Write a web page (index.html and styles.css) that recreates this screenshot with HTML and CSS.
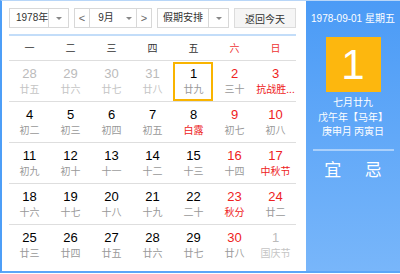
FILE: index.html
```html
<!doctype html>
<html lang="zh-CN">
  <head>
    <meta charset="UTF-8" />
    <meta name="viewport" content="width=device-width, initial-scale=1.0" />
    <title>万年历</title>
    <link rel="stylesheet" href="styles.css">
  </head>
  <body>
    <div class="calendar">
      <div class="main">
        <div class="toolbar">
          <div class="select year">
            <span class="select-text">1978年</span>
            <span class="select-arrow"><i class="caret"></i></span>
          </div>
          <div class="select month">
            <span class="nav">&lt;</span>
            <span class="select-text">9月</span>
            <span class="month-arrow"><i class="caret"></i></span>
            <span class="nav next">&gt;</span>
          </div>
          <div class="select holiday">
            <span class="select-text">假期安排</span>
            <span class="select-arrow"><i class="caret"></i></span>
          </div>
          <button class="today-btn">返回今天</button>
        </div>

        <div class="weekdays">
          <span>一</span><span>二</span><span>三</span><span>四</span><span>五</span>
          <span class="red">六</span><span class="red">日</span>
        </div>

        <div class="days">
          <div class="day other"><b>28</b><em>廿五</em></div>
          <div class="day other"><b>29</b><em>廿六</em></div>
          <div class="day other"><b>30</b><em>廿七</em></div>
          <div class="day other"><b>31</b><em>廿八</em></div>
          <div class="day today"><b>1</b><em>廿九</em></div>
          <div class="day weekend"><b>2</b><em>三十</em></div>
          <div class="day weekend fest"><b>3</b><em>抗战胜...</em></div>

          <div class="day"><b>4</b><em>初二</em></div>
          <div class="day"><b>5</b><em>初三</em></div>
          <div class="day"><b>6</b><em>初四</em></div>
          <div class="day"><b>7</b><em>初五</em></div>
          <div class="day fest"><b>8</b><em>白露</em></div>
          <div class="day weekend"><b>9</b><em>初七</em></div>
          <div class="day weekend"><b>10</b><em>初八</em></div>

          <div class="day"><b>11</b><em>初九</em></div>
          <div class="day"><b>12</b><em>初十</em></div>
          <div class="day"><b>13</b><em>十一</em></div>
          <div class="day"><b>14</b><em>十二</em></div>
          <div class="day"><b>15</b><em>十三</em></div>
          <div class="day weekend"><b>16</b><em>十四</em></div>
          <div class="day weekend fest"><b>17</b><em>中秋节</em></div>

          <div class="day"><b>18</b><em>十六</em></div>
          <div class="day"><b>19</b><em>十七</em></div>
          <div class="day"><b>20</b><em>十八</em></div>
          <div class="day"><b>21</b><em>十九</em></div>
          <div class="day"><b>22</b><em>二十</em></div>
          <div class="day weekend fest"><b>23</b><em>秋分</em></div>
          <div class="day weekend"><b>24</b><em>廿二</em></div>

          <div class="day"><b>25</b><em>廿三</em></div>
          <div class="day"><b>26</b><em>廿四</em></div>
          <div class="day"><b>27</b><em>廿五</em></div>
          <div class="day"><b>28</b><em>廿六</em></div>
          <div class="day"><b>29</b><em>廿七</em></div>
          <div class="day weekend"><b>30</b><em>廿八</em></div>
          <div class="day other"><b>1</b><em>国庆节</em></div>
        </div>
      </div>

      <div class="side">
        <div class="side-date">1978-09-01 星期五</div>
        <div class="big-day">1</div>
        <div class="lunar">
          <div>七月廿九</div>
          <div>戊午年【马年】</div>
          <div>庚申月 丙寅日</div>
        </div>
        <div class="yiji">
          <span>宜</span>
          <span>忌</span>
        </div>
      </div>
    </div>
  </body>
</html>
```

FILE: styles.css
```css
body {
  margin: 0;
  background: #fff;
  font-family: "Liberation Sans", Arial, "Noto Sans CJK SC", sans-serif;
}
.calendar {
  display: flex;
  width: 400px;
  height: 273px;
  box-sizing: border-box;
  border-left: 2px solid #4d9ef7;
  border-bottom: 2px solid #5aa6f8;
  border-top: 1px solid #b8d6f8;
}
.main {
  width: 304px;
  padding: 7px 10px 0 7px;
  box-sizing: border-box;
  background: #fff;
}
.toolbar {
  display: flex;
  gap: 5px;
  height: 26px;
  border-bottom: 2px solid #c3ddf9;
  white-space: nowrap;
}
.select {
  display: flex;
  height: 20px;
  border: 1px solid #d8d8d8;
  box-sizing: border-box;
  font-size: 10px;
  color: #333;
  line-height: 18px;
}
.select-text {
  flex: 1;
  text-align: center;
}
.select-arrow,
.month-arrow {
  width: 19px;
  display: flex;
  align-items: center;
  justify-content: center;
  border-left: 1px solid #d8d8d8;
}
.month-arrow {
  border-left: none;
  width: 14px;
}
.caret {
  width: 0;
  height: 0;
  border-left: 3px solid transparent;
  border-right: 3px solid transparent;
  border-top: 3px solid #888;
}
.year {
  width: 60px;
}
.year .select-text {
  padding-left: 6px;
}
.month {
  width: 78px;
}
.nav {
  width: 14px;
  text-align: center;
  color: #666;
  font-size: 11px;
  border-right: 1px solid #d8d8d8;
}
.nav.next {
  border-right: none;
  border-left: 1px solid #d8d8d8;
}
.holiday {
  width: 72px;
}
.today-btn {
  width: 62px;
  height: 20px;
  padding: 0;
  border: 1px solid #dcdcdc;
  background: #f5f5f5;
  font-family: "Liberation Sans", "Noto Sans CJK SC", sans-serif;
  font-size: 10px;
  color: #333;
}
.weekdays {
  display: grid;
  grid-template-columns: repeat(7, 1fr);
  width: 287px;
  height: 24px;
  border-bottom: 1px solid #dedede;
  font-family: "Noto Sans CJK SC", sans-serif;
  font-size: 10px;
  line-height: 24px;
  text-align: center;
  color: #333;
}
.red {
  color: #e33;
}
.days {
  display: grid;
  grid-template-columns: repeat(7, 1fr);
  width: 287px;
}
.day {
  height: 35px;
  padding-top: 5px;
  border-bottom: 1px solid #dedede;
  display: flex;
  flex-direction: column;
  align-items: center;
  position: relative;
  white-space: nowrap;
}
.day b {
  font-weight: normal;
  font-size: 13px;
  line-height: 16px;
  color: #000;
}
.day em {
  font-style: normal;
  font-family: "Noto Sans CJK SC", sans-serif;
  font-size: 10px;
  line-height: 14px;
  color: #999;
}
.day:nth-last-child(-n+7) {
  border-bottom: none;
}
.weekend b {
  color: #e22;
}
.fest em {
  color: #e22;
}
.other b {
  color: #bbb;
}
.other em {
  color: #c4c4c4;
}
.today::after {
  content: "";
  position: absolute;
  left: 0;
  top: 1px;
  width: 40px;
  height: 39px;
  box-sizing: border-box;
  border: 2px solid #f9b400;
}
.side {
  flex: 1;
  display: flex;
  flex-direction: column;
  align-items: center;
  color: #fff;
  white-space: nowrap;
  background: linear-gradient(#4b9bf6, #78b6fa);
}
.side-date {
  margin-top: 12px;
  font-family: "Liberation Sans", "Noto Sans CJK SC", sans-serif;
  font-size: 10px;
  line-height: 12px;
}
.big-day {
  margin-top: 12px;
  width: 55px;
  height: 55px;
  background: #fdb70e;
  font-size: 42px;
  line-height: 55px;
  text-align: center;
}
.lunar {
  margin-top: 3px;
  font-family: "Noto Sans CJK SC", sans-serif;
  font-size: 10px;
  line-height: 14.5px;
  text-align: center;
}
.yiji {
  margin-top: 10px;
  width: 81px;
  padding-top: 8px;
  border-top: 2px solid rgba(255, 255, 255, 0.45);
  display: flex;
  justify-content: space-around;
  font-family: "Noto Sans CJK SC", sans-serif;
  font-size: 17px;
  line-height: 20px;
}
```
